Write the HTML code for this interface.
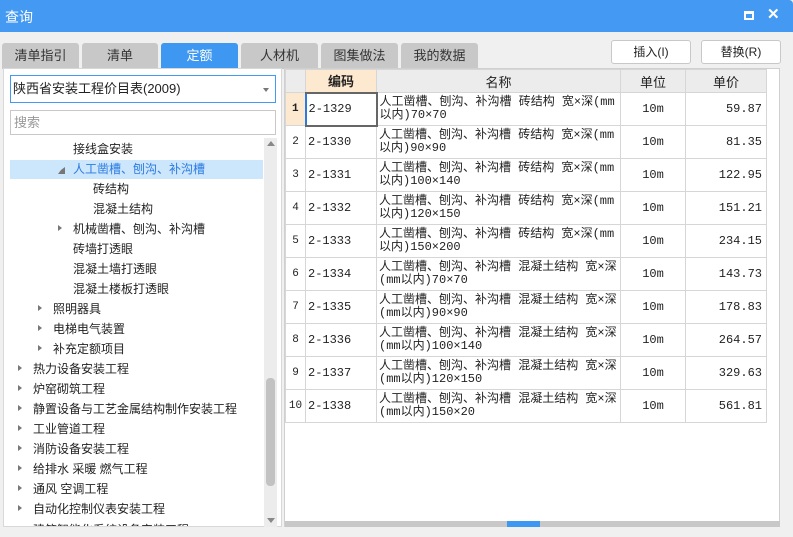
<!DOCTYPE html>
<html><head><meta charset="utf-8"><style>
*{margin:0;padding:0;box-sizing:border-box}
body{width:793px;height:537px;overflow:hidden;background:#f0f0f0;font-family:"Liberation Sans","Noto Sans CJK SC",sans-serif;font-size:12px;color:#222;position:relative}
.title{position:absolute;left:0;top:0;width:793px;height:32px;background:#4499f3;color:#fff;font-size:14px;line-height:34px;padding-left:5px;border-top-right-radius:4px}
.tab{position:absolute;top:43px;height:26px;background:#c8c8c8;border-radius:3px 3px 0 0;text-align:center;line-height:25px;font-size:13px;color:#333}
.tab.act{background:#3e97f0;color:#fff}
.btn{position:absolute;top:40px;height:24px;border:1px solid #c8c8c8;background:#fff;border-radius:3px;text-align:center;line-height:22px;font-size:12px}
.left{position:absolute;left:3px;top:68px;width:279px;height:459px;background:#fff;border:1px solid #d8d8d8}
.sel{position:absolute;left:10px;top:75px;width:266px;height:28px;border:1px solid #4499f3;background:#fff;font-size:13px;line-height:26px;padding-left:2px}
.sel:after{content:"";position:absolute;right:6px;top:12px;border:3px solid transparent;border-top:4px solid #777}
.search{position:absolute;left:10px;top:110px;width:266px;height:25px;border:1px solid #c8c8c8;color:#999;font-size:13px;line-height:23px;padding-left:3px}
.tr{position:absolute;height:20px;line-height:20px;font-size:12px;white-space:nowrap}
.ar{position:absolute;width:0;height:0;border:3.5px solid transparent;border-left:4px solid #777}
.sb{position:absolute;left:264px;top:138px;width:13px;height:389px;background:#ececec}
.right{position:absolute;left:284px;top:68px;width:496px;height:459px;background:#fff;border:1px solid #d0d0d0}
table{position:absolute;left:285px;top:69px;width:481px;table-layout:fixed;border-collapse:collapse;font-family:"Liberation Mono","Noto Sans CJK SC",monospace;font-size:12px}
td,th{border:1px solid #d6d6d6;height:33px;padding:0 2px;vertical-align:middle;overflow:hidden}
th{height:23px;background:#ececec;font-weight:normal;font-family:"Liberation Sans","Noto Sans CJK SC",sans-serif;font-size:13px}
td.n{text-align:center;font-size:11px;background:#fff;padding:0}
td.nm{line-height:13px;font-size:12px}
td.u{text-align:center}
td.p{text-align:right;padding-right:4px}
</style></head><body>
<div class="title">查询
<div style="position:absolute;left:744px;top:11px;width:10px;height:9px;border:2px solid #fff;border-top-width:3px"></div>
<div style="position:absolute;left:767px;top:4px;font-size:15px;font-weight:bold;line-height:22px">✕</div>
</div>
<div class="tab" style="left:2px;width:77px">清单指引</div>
<div class="tab" style="left:82px;width:76px">清单</div>
<div class="tab act" style="left:161px;width:77px">定额</div>
<div class="tab" style="left:241px;width:77px">人材机</div>
<div class="tab" style="left:321px;width:77px">图集做法</div>
<div class="tab" style="left:401px;width:77px">我的数据</div>
<div class="btn" style="left:611px;width:80px">插入(I)</div>
<div class="btn" style="left:701px;width:80px">替换(R)</div>
<div class="left"></div>
<div class="sel">陕西省安装工程价目表(2009)</div>
<div class="search">搜索</div>
<div style="position:absolute;left:10px;top:160px;width:253px;height:19px;background:#cce6fc"></div>
<div class="tr" style="left:73px;top:139px">接线盒安装</div>
<div class="tr" style="left:73px;top:159px;color:#2a7ae2">人工凿槽、刨沟、补沟槽</div>
<div style="position:absolute;left:58px;top:167px;border:3px solid transparent;border-right:4px solid #777;border-bottom:4px solid #777;width:0;height:0"></div>
<div class="tr" style="left:93px;top:179px">砖结构</div>
<div class="tr" style="left:93px;top:199px">混凝土结构</div>
<div class="ar" style="left:58px;top:225px"></div><div class="tr" style="left:73px;top:219px">机械凿槽、刨沟、补沟槽</div>
<div class="tr" style="left:73px;top:239px">砖墙打透眼</div>
<div class="tr" style="left:73px;top:259px">混凝土墙打透眼</div>
<div class="tr" style="left:73px;top:279px">混凝土楼板打透眼</div>
<div class="ar" style="left:38px;top:305px"></div><div class="tr" style="left:53px;top:299px">照明器具</div>
<div class="ar" style="left:38px;top:325px"></div><div class="tr" style="left:53px;top:319px">电梯电气装置</div>
<div class="ar" style="left:38px;top:345px"></div><div class="tr" style="left:53px;top:339px">补充定额项目</div>
<div class="ar" style="left:18px;top:365px"></div><div class="tr" style="left:33px;top:359px">热力设备安装工程</div>
<div class="ar" style="left:18px;top:385px"></div><div class="tr" style="left:33px;top:379px">炉窑砌筑工程</div>
<div class="ar" style="left:18px;top:405px"></div><div class="tr" style="left:33px;top:399px">静置设备与工艺金属结构制作安装工程</div>
<div class="ar" style="left:18px;top:425px"></div><div class="tr" style="left:33px;top:419px">工业管道工程</div>
<div class="ar" style="left:18px;top:445px"></div><div class="tr" style="left:33px;top:439px">消防设备安装工程</div>
<div class="ar" style="left:18px;top:465px"></div><div class="tr" style="left:33px;top:459px">给排水 采暖 燃气工程</div>
<div class="ar" style="left:18px;top:485px"></div><div class="tr" style="left:33px;top:479px">通风 空调工程</div>
<div class="ar" style="left:18px;top:505px"></div><div class="tr" style="left:33px;top:499px">自动化控制仪表安装工程</div>
<div style="position:absolute;left:4px;top:520px;width:259px;height:6px;overflow:hidden"><div class="tr" style="left:29px;top:0">建筑智能化系统设备安装工程</div></div>
<div class="sb"><div style="position:absolute;left:3px;top:3px;border:4px solid transparent;border-bottom:5px solid #888;border-top:0"></div>
<div style="position:absolute;left:2px;top:240px;width:9px;height:108px;background:#c2c2c2;border-radius:4px"></div>
<div style="position:absolute;left:3px;top:380px;border:4px solid transparent;border-top:5px solid #888;border-bottom:0"></div></div>
<div class="right"></div>
<table>
<colgroup><col style="width:20px"><col style="width:71px"><col style="width:244px"><col style="width:65px"><col style="width:81px"></colgroup>
<tr><th></th><th style="background:#fde9cf;font-weight:bold">编码</th><th>名称</th><th>单位</th><th>单价</th></tr>
<tr><td class="n" style="background:#fde9cf;font-weight:bold">1</td><td style="border:2px solid #666;border-left:2px solid #2a7ae2">2-1329</td><td class="nm">人工凿槽、刨沟、补沟槽 砖结构 宽×深(mm以内)70×70</td><td class="u">10m</td><td class="p">59.87</td></tr>
<tr><td class="n">2</td><td>2-1330</td><td class="nm">人工凿槽、刨沟、补沟槽 砖结构 宽×深(mm以内)90×90</td><td class="u">10m</td><td class="p">81.35</td></tr>
<tr><td class="n">3</td><td>2-1331</td><td class="nm">人工凿槽、刨沟、补沟槽 砖结构 宽×深(mm以内)100×140</td><td class="u">10m</td><td class="p">122.95</td></tr>
<tr><td class="n">4</td><td>2-1332</td><td class="nm">人工凿槽、刨沟、补沟槽 砖结构 宽×深(mm以内)120×150</td><td class="u">10m</td><td class="p">151.21</td></tr>
<tr><td class="n">5</td><td>2-1333</td><td class="nm">人工凿槽、刨沟、补沟槽 砖结构 宽×深(mm以内)150×200</td><td class="u">10m</td><td class="p">234.15</td></tr>
<tr><td class="n">6</td><td>2-1334</td><td class="nm">人工凿槽、刨沟、补沟槽 混凝土结构 宽×深(mm以内)70×70</td><td class="u">10m</td><td class="p">143.73</td></tr>
<tr><td class="n">7</td><td>2-1335</td><td class="nm">人工凿槽、刨沟、补沟槽 混凝土结构 宽×深(mm以内)90×90</td><td class="u">10m</td><td class="p">178.83</td></tr>
<tr><td class="n">8</td><td>2-1336</td><td class="nm">人工凿槽、刨沟、补沟槽 混凝土结构 宽×深(mm以内)100×140</td><td class="u">10m</td><td class="p">264.57</td></tr>
<tr><td class="n">9</td><td>2-1337</td><td class="nm">人工凿槽、刨沟、补沟槽 混凝土结构 宽×深(mm以内)120×150</td><td class="u">10m</td><td class="p">329.63</td></tr>
<tr><td class="n">10</td><td>2-1338</td><td class="nm">人工凿槽、刨沟、补沟槽 混凝土结构 宽×深(mm以内)150×20</td><td class="u">10m</td><td class="p">561.81</td></tr>
</table>
<div style="position:absolute;left:285px;top:521px;width:495px;height:6px;background:#c8c8c8"></div>
<div style="position:absolute;left:507px;top:521px;width:33px;height:6px;background:#3e97f0"></div>
</body></html>
